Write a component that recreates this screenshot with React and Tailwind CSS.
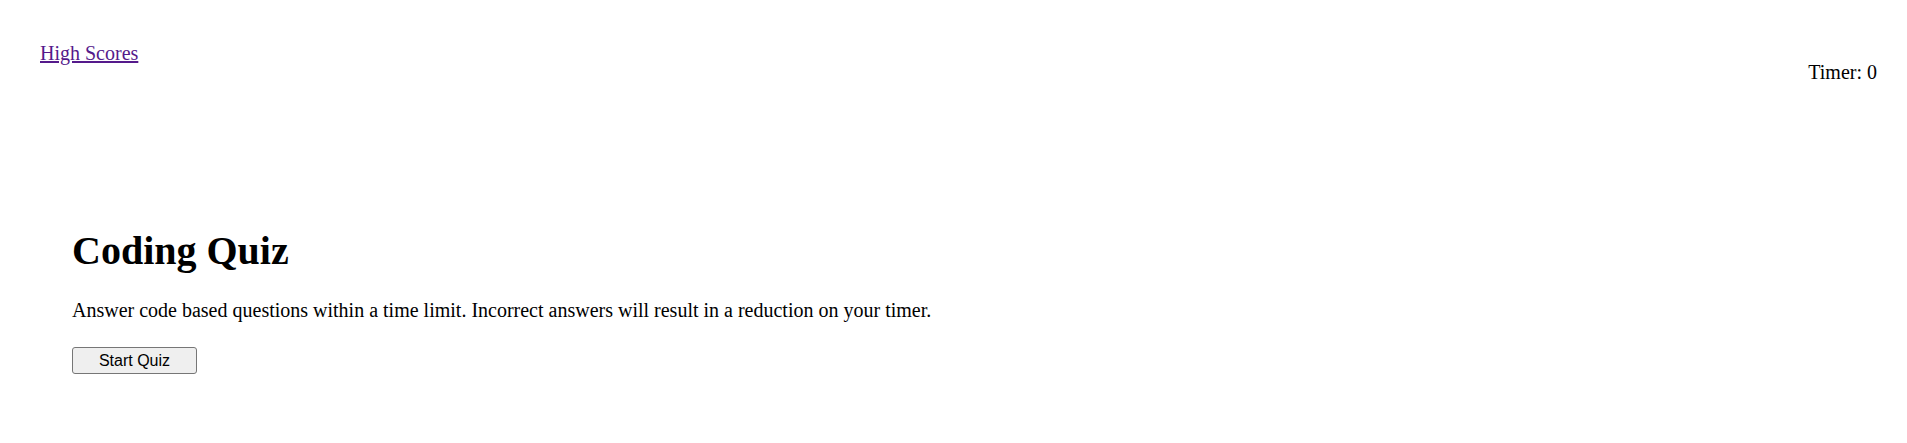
export default function App() {
  return (
    <div className="min-h-[443px] bg-white text-black font-['Times_New_Roman','Liberation_Serif',serif] text-[20px] leading-[22px]">
      <header className="flex justify-between items-start pt-[42px] pl-[40px] pr-[30px]">
        <a href="#" className="text-[#551a8b] underline">High Scores</a>
        <div className="mt-[19px]">Timer: 0</div>
      </header>
      <main className="pl-[72px] mt-[146px]">
        <h1 className="text-[40px] leading-[44px] font-bold">Coding Quiz</h1>
        <p className="mt-[26px]">
          Answer code based questions within a time limit. Incorrect answers will result in a reduction on your timer.
        </p>
        <button className="mt-[26px] w-[125px] h-[27px] border border-[#767676] rounded-[3px] bg-[#efefef] font-['Arial','Liberation_Sans',sans-serif] text-[16px] leading-[18px] text-black">
          Start Quiz
        </button>
      </main>
    </div>
  );
}
